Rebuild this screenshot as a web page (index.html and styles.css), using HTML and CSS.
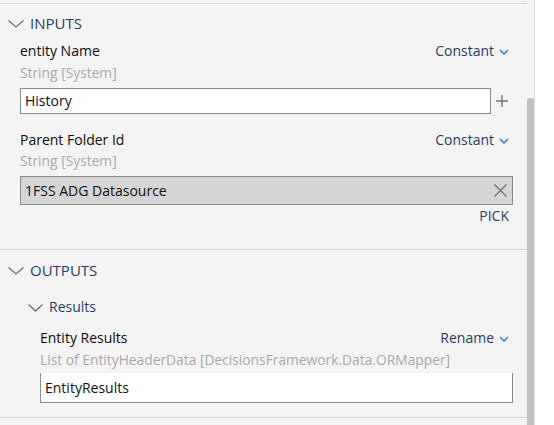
FILE: index.html
```html
<!DOCTYPE html>
<html>
<head>
<meta charset="utf-8">
<link rel="stylesheet" href="styles.css">
</head>
<body>
<div class="panel">
  <div class="content">
    <div class="section">
      <div class="sec-head">
        <svg class="chev-big" width="16" height="8" viewBox="0 0 16 8"><path d="M0.5 0.5 L8 7 L15.5 0.5" fill="none" stroke="#6f6f6f" stroke-width="1.3"/></svg>
        <span>INPUTS</span>
      </div>
      <div class="field">
        <div class="label-row">
          <span class="label">entity Name</span>
          <span class="mode">Constant<svg class="chev-sm" width="10" height="6" viewBox="0 0 10 6"><path d="M1 1 L5 5 L9 1" fill="none" stroke="#3b7fd9" stroke-width="1.6"/></svg></span>
        </div>
        <div class="type">String [System]</div>
        <div class="input-row">
          <div class="input">History</div>
          <div class="plus"><svg width="12" height="12" viewBox="0 0 12 12"><path d="M6 0 V12 M0 6 H12" stroke="#777" stroke-width="1.4"/></svg></div>
        </div>
      </div>
      <div class="field field2">
        <div class="label-row">
          <span class="label">Parent Folder Id</span>
          <span class="mode">Constant<svg class="chev-sm" width="10" height="6" viewBox="0 0 10 6"><path d="M1 1 L5 5 L9 1" fill="none" stroke="#3b7fd9" stroke-width="1.6"/></svg></span>
        </div>
        <div class="type type2">String [System]</div>
        <div class="picked">
          <span>1FSS ADG Datasource</span>
          <svg width="13" height="13" viewBox="0 0 13 13"><path d="M0.5 0.5 L12.5 12.5 M12.5 0.5 L0.5 12.5" stroke="#7a7a7a" stroke-width="1.5"/></svg>
        </div>
        <div class="pick">PICK</div>
      </div>
    </div>
    <div class="section out">
      <div class="sec-head out-head">
        <svg class="chev-big" width="16" height="8" viewBox="0 0 16 8"><path d="M0.5 0.5 L8 7 L15.5 0.5" fill="none" stroke="#6f6f6f" stroke-width="1.3"/></svg>
        <span>OUTPUTS</span>
      </div>
      <div class="sub-head">
        <svg class="chev-mid" width="15" height="8" viewBox="0 0 15 8"><path d="M0.5 0.5 L7.5 7 L14.5 0.5" fill="none" stroke="#6f6f6f" stroke-width="1.3"/></svg>
        <span>Results</span>
      </div>
      <div class="field ofield">
        <div class="label-row">
          <span class="label">Entity Results</span>
          <span class="mode">Rename<svg class="chev-sm" width="10" height="6" viewBox="0 0 10 6"><path d="M1 1 L5 5 L9 1" fill="none" stroke="#3b7fd9" stroke-width="1.6"/></svg></span>
        </div>
        <div class="type">List of EntityHeaderData [DecisionsFramework.Data.ORMapper]</div>
        <div class="out-input">EntityResults</div>
      </div>
    </div>
  </div>
  <div class="scroll">
    <div class="thumb"></div>
  </div>
</div>
</body>
</html>
```
FILE: styles.css
```css
html, body {
  margin: 0;
  padding: 0;
  background: #ffffff;
}
body {
  font-family: "Segoe UI", "Open Sans", "Noto Sans", sans-serif;
  font-size: 14px;
  color: #111;
}
.panel {
  width: 534px;
  height: 425px;
  background: #f4f4f4;
  border-right: 1px solid #dadada;
  display: flex;
  overflow: hidden;
}
.content {
  width: 527px;
  padding-top: 3px;
}
.section {
  border-top: 1px solid #d9d9d9;
  padding-bottom: 24px;
}
.section.out {
  padding-bottom: 14px;
  border-bottom: 1px solid #d9d9d9;
}
.sec-head {
  display: flex;
  align-items: center;
  padding: 9px 0 8px 8px;
  line-height: 20px;
  font-size: 15px;
  color: #2b3c6b;
}
.out-head {
  padding-top: 10px;
  padding-bottom: 17px;
}
.chev-big {
  margin-right: 6px;
  margin-top: 1px;
}
.sub-head {
  display: flex;
  align-items: center;
  padding-left: 28px;
  line-height: 20px;
  font-size: 14px;
  color: #2b3c6b;
}
.chev-mid {
  margin-right: 6px;
  margin-top: 1px;
}
.field {
  padding: 0 14px 0 20px;
}
.field2 {
  margin-top: 16px;
}
.ofield {
  margin-top: 11px;
  padding-left: 40px;
}
.label-row {
  display: flex;
  justify-content: space-between;
  align-items: center;
  line-height: 20px;
  padding-right: 4px;
}
.label {
  color: #0d0d0d;
}
.mode {
  color: #2b3c6b;
  display: flex;
  align-items: center;
}
.chev-sm {
  margin-left: 5px;
  margin-top: 2px;
}
.type {
  color: #a9a9a9;
  font-size: 13.8px;
  line-height: 18px;
  margin-top: 3px;
  white-space: nowrap;
}
.type2 {
  margin-top: 2px;
}
.input-row {
  display: flex;
  margin-top: 6px;
}
.input {
  flex: 1;
  height: 24px;
  border: 1px solid #8a8a8a;
  background: #fff;
  padding-left: 4px;
  line-height: 24px;
  color: #111;
}
.plus {
  width: 22px;
  display: flex;
  align-items: center;
  justify-content: center;
}
.picked {
  margin-top: 6px;
  height: 27px;
  border: 1px solid #8a8a8a;
  background: #d5d5d5;
  display: flex;
  align-items: center;
  justify-content: space-between;
  padding: 0 5px 0 4px;
  color: #111;
}
.pick {
  margin-top: 2px;
  text-align: right;
  line-height: 18px;
  font-size: 14px;
  color: #2b3c6b;
  padding-right: 4px;
}
.out-input {
  margin-top: 4px;
  height: 29px;
  border: 1px solid #8a8a8a;
  border-top: none;
  background: #fff;
  padding-left: 4px;
  line-height: 29px;
  color: #111;
}
.scroll {
  width: 7px;
  padding-top: 98px;
  display: flex;
  flex-direction: column;
}
.thumb {
  flex: 1;
  background: #c2c2c2;
  border-radius: 3px 3px 0 0;
}
```
